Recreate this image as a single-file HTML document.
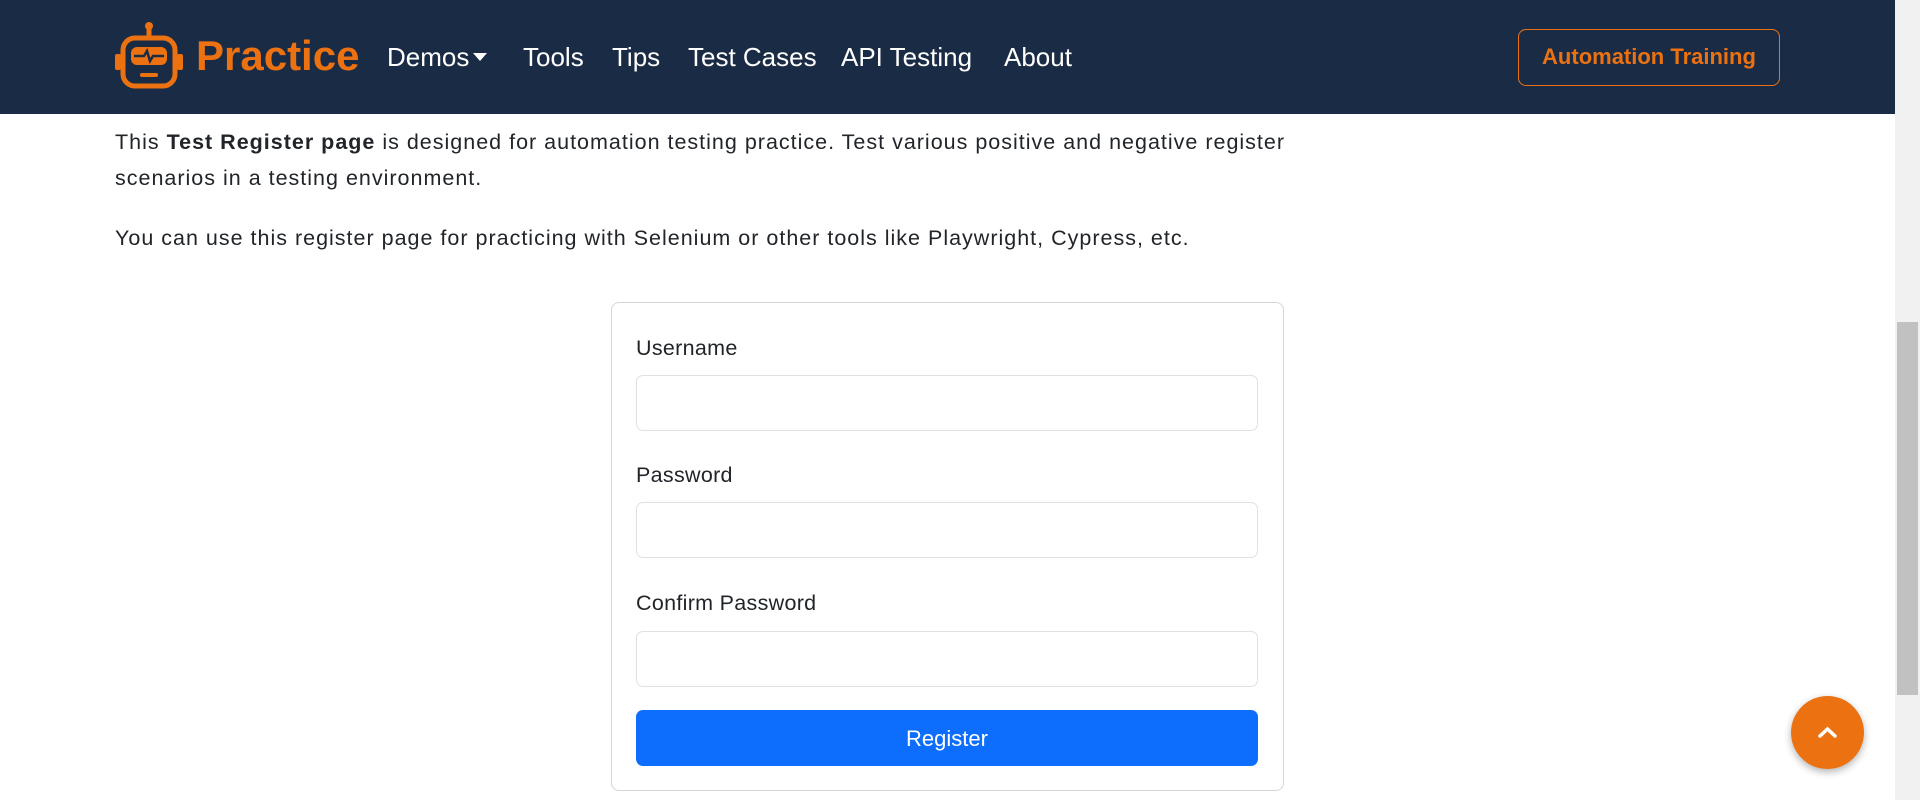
<!DOCTYPE html>
<html><head><meta charset="utf-8"><style>
*{box-sizing:border-box;margin:0;padding:0}
html,body{width:1920px;height:800px;overflow:hidden;background:#fff;font-family:"Liberation Sans",Arial,sans-serif;color:#212529}
.nav{position:absolute;left:0;top:0;width:1895px;height:114px;background:#1a2b45}
.logo{position:absolute;left:113px;top:20px}
.brand{position:absolute;left:196px;top:32px;font-size:42px;font-weight:bold;color:#ec7211;letter-spacing:0px}
.links a{position:absolute;top:42px;font-size:26px;color:#fff;text-decoration:none;white-space:nowrap}
.caret{display:inline-block;width:0;height:0;border-left:7px solid transparent;border-right:7px solid transparent;border-top:8px solid #fff;vertical-align:middle;margin-left:4px;margin-top:-4px}
.btn{position:absolute;left:1518px;top:29px;width:262px;height:57px;border:1.5px solid #ec7211;border-radius:8px;color:#ec7211;font-weight:bold;font-size:22px;text-align:center;line-height:54px}
p{position:absolute;left:115px;font-size:21.5px;line-height:36px;width:1200px;letter-spacing:1px}
.card{position:absolute;left:611px;top:302px;width:673px;height:489px;border:1px solid #d6d6d6;border-radius:8px}
label{position:absolute;left:636px;font-size:21.5px;letter-spacing:0.3px}
.in{position:absolute;left:636px;width:622px;height:56px;border:1px solid #dee2e6;border-radius:7px}
.reg{position:absolute;left:636px;top:710px;width:622px;height:56px;background:#0d6efd;border-radius:7px;color:#fff;font-size:22px;text-align:center;line-height:58px}
.sb{position:absolute;left:1895px;top:0;width:25px;height:800px;background:#f1f1f1}
.thumb{position:absolute;left:1897px;top:322px;width:21px;height:373px;background:#c1c1c1}
.top{position:absolute;left:1791px;top:696px;width:73px;height:73px;border-radius:50%;background:#ec7211;box-shadow:0 3px 8px rgba(0,0,0,.3)}
</style></head><body>
<div class="nav">
<svg class="logo" width="72" height="70" viewBox="0 0 72 70" fill="none" stroke="#ec7211" stroke-width="5">
<circle cx="36" cy="6" r="4" fill="#ec7211" stroke="none"/>
<line x1="36" y1="8" x2="36" y2="18"/>
<rect x="10" y="18" width="52" height="48" rx="12"/>
<rect x="2" y="34" width="6" height="16" rx="2" fill="#ec7211" stroke="none"/>
<rect x="64" y="34" width="6" height="16" rx="2" fill="#ec7211" stroke="none"/>
<rect x="18" y="27" width="36" height="18" rx="6" fill="#ec7211" stroke="none"/>
<polyline points="21,36 31,36 34,31 37,41 40,36 51,36" stroke="#1a2b45" stroke-width="2.5"/>
<line x1="29" y1="55" x2="43" y2="55" stroke-width="4" stroke-linecap="round"/>
</svg>
<div class="brand">Practice</div>
<div class="links">
<a style="left:387px">Demos<span class="caret"></span></a>
<a style="left:523px">Tools</a>
<a style="left:612px">Tips</a>
<a style="left:688px">Test Cases</a>
<a style="left:841px">API Testing</a>
<a style="left:1004px">About</a>
</div>
<div class="btn">Automation Training</div>
</div>
<p style="top:124px">This <b>Test Register page</b> is designed for automation testing practice. Test various positive and negative register scenarios in a testing environment.</p>
<p style="top:220px">You can use this register page for practicing with Selenium or other tools like Playwright, Cypress, etc.</p>
<div class="card"></div>
<label style="top:336px">Username</label>
<div class="in" style="top:375px"></div>
<label style="top:463px">Password</label>
<div class="in" style="top:502px"></div>
<label style="top:591px">Confirm Password</label>
<div class="in" style="top:631px"></div>
<div class="reg">Register</div>
<div class="sb"></div><div class="thumb"></div>
<div class="top"><svg width="73" height="73" viewBox="0 0 73 73"><polyline points="29,40 36.5,33 44,40" fill="none" stroke="#fff" stroke-width="3.5" stroke-linecap="round"/></svg></div>
</body></html>
